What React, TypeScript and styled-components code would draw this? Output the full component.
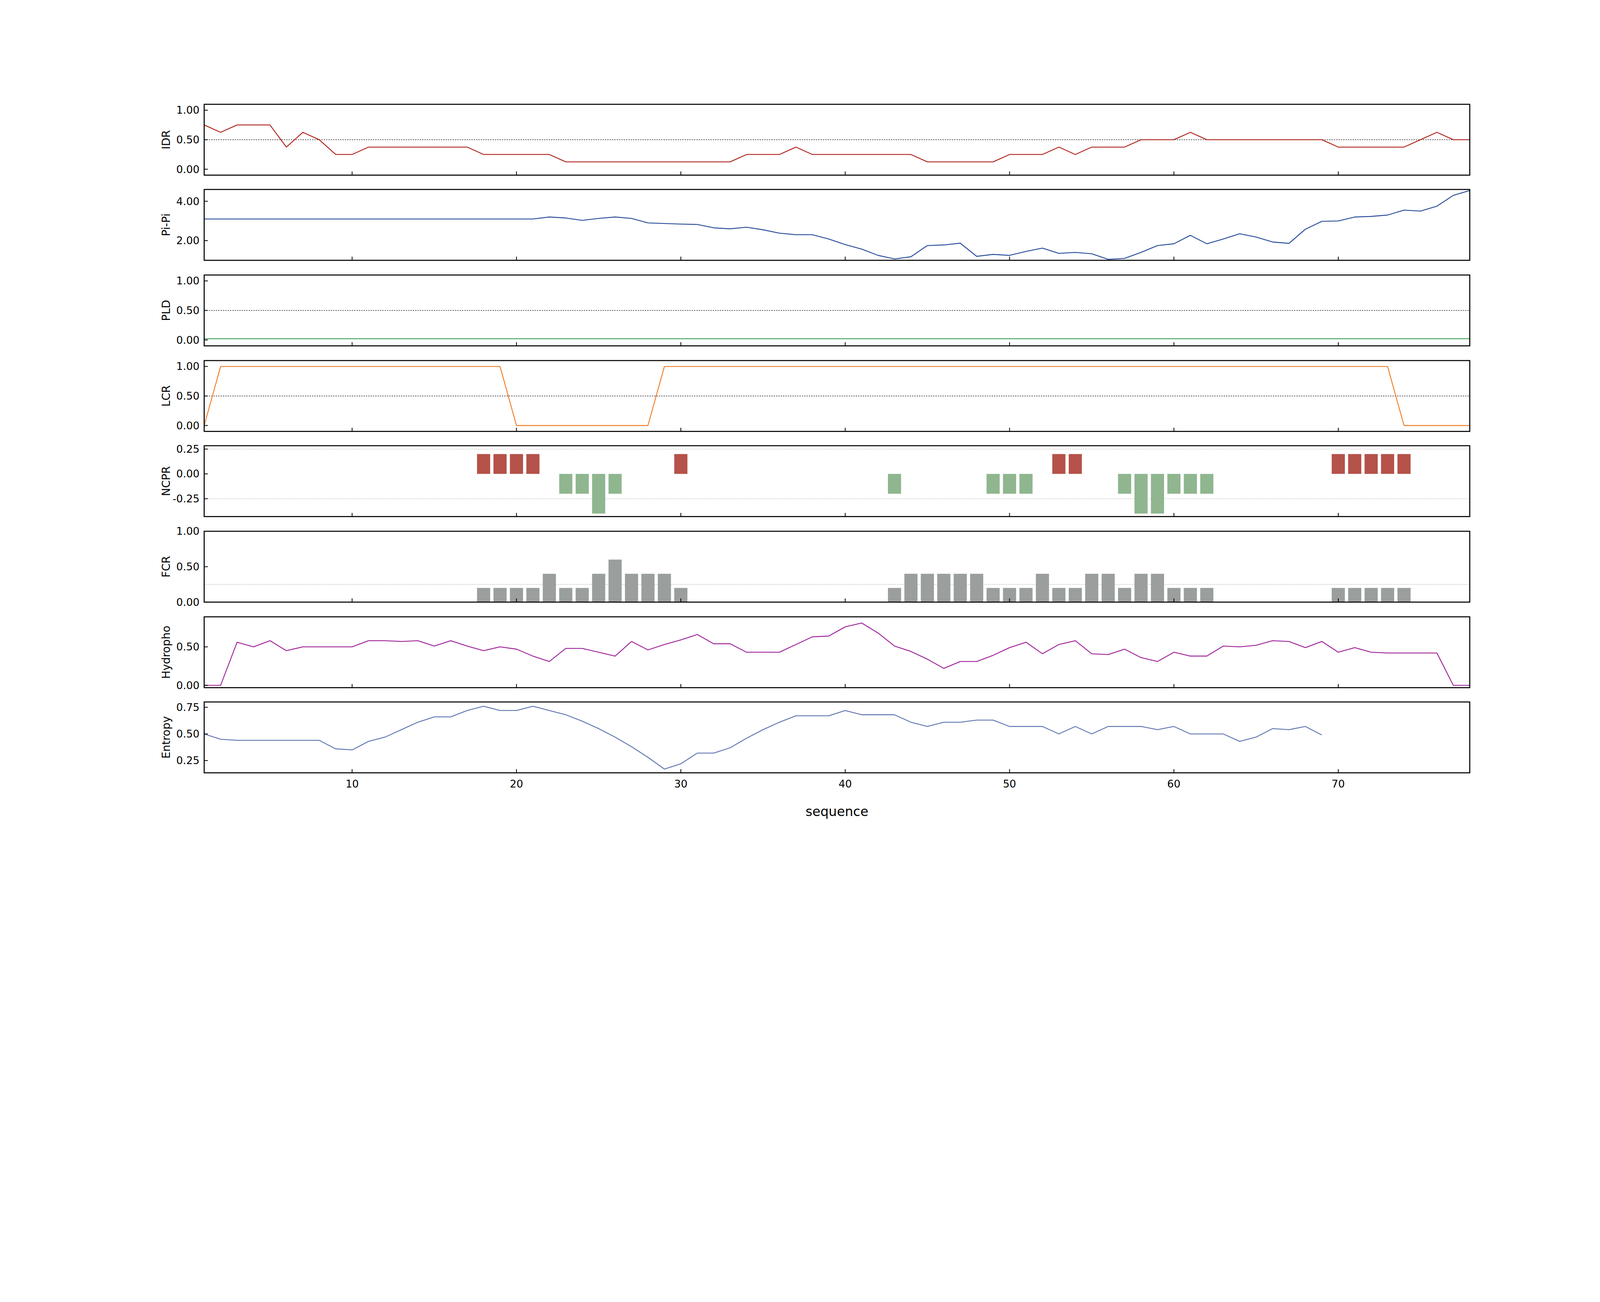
import React from "react";
import styled, { createGlobalStyle } from "styled-components";

const Global = createGlobalStyle`
  html, body { margin: 0; padding: 0; background: #fff; overflow: hidden; }
  body { font-family: "DejaVu Sans", sans-serif; }
`;

const S = 2 / 3;
const W = 6250;
const L = 784;
const PW = 4860;
const PH = 272;
const px = (x: number) => L + ((x - 1) * PW) / 77;

const Figure = styled.div`
  width: ${W * S}px;
  height: ${3333 * S}px;
  padding-top: ${400 * S}px;
  box-sizing: border-box;
  display: flex;
  flex-direction: column;
  gap: ${56 * S}px;
  background: #fff;
  overflow: hidden;
`;
const PanelSvg = styled.svg`
  display: block;
  overflow: visible;
  flex: none;
`;
const Bottom = styled.div`
  display: flex;
  flex-direction: column;
  margin-top: ${-56 * S}px;
`;
const XLabel = styled.div`
  width: ${PW * S}px;
  margin-left: ${L * S}px;
  text-align: center;
  font-family: "DejaVu Sans", sans-serif;
  font-size: ${50 * S}px;
  line-height: 1.15;
  color: #000;
  margin-top: ${50 * S}px;
`;

type Ref = { v: number; color: string; dash: string };
type PanelProps = {
  label: string;
  ymin: number;
  ymax: number;
  ticks: [number, string][];
  line?: number[];
  bars?: [number, number, string][];
  color?: string;
  refs?: Ref[];
};

const Panel: React.FC<PanelProps> = ({ label, ymin, ymax, ticks, line, bars, color, refs }) => {
  const py = (v: number) => PH - ((v - ymin) / (ymax - ymin)) * PH;
  const bw = (PW / 77) * 0.8;
  return (
    <PanelSvg width={W * S} height={PH * S} viewBox={`0 0 ${W} ${PH}`}>
      <defs>
        <clipPath id={`c-${label}`}>
          <rect x={L} y={0} width={PW} height={PH} />
        </clipPath>
      </defs>
      <text
        x={0}
        y={0}
        transform={`translate(652 ${PH / 2}) rotate(-90)`}
        textAnchor="middle"
        fontSize={42}
        fontFamily="DejaVu Sans, sans-serif"
      >
        {label}
      </text>
      <g clipPath={`url(#c-${label})`}>
        {refs?.map((r, i) => (
          <line key={i} x1={L} x2={L + PW} y1={py(r.v)} y2={py(r.v)} stroke={r.color} strokeWidth={2} strokeDasharray={r.dash} />
        ))}
        {bars?.map(([x, v, c], i) => (
          <rect key={i} x={px(x) - bw / 2} width={bw} y={Math.min(py(v), py(0))} height={Math.abs(py(v) - py(0))} fill={c} />
        ))}
        {line && (
          <polyline
            fill="none"
            stroke={color}
            strokeWidth={3.5}
            strokeLinejoin="round"
            points={line.map((v, i) => `${px(i + 1)},${py(v)}`).join(" ")}
          />
        )}
      </g>
      {ticks.map(([v, t]) => (
        <g key={t}>
          <line x1={L} x2={L + 14} y1={py(v)} y2={py(v)} stroke="#000" strokeWidth={3} />
          <text x={L - 18} y={py(v) + 14} textAnchor="end" fontSize={40} fontFamily="DejaVu Sans, sans-serif">
            {t}
          </text>
        </g>
      ))}
      {[10, 20, 30, 40, 50, 60, 70].map((x) => (
        <line key={x} x1={px(x)} x2={px(x)} y1={PH} y2={PH - 14} stroke="#000" strokeWidth={3} />
      ))}
      <rect x={L} y={0} width={PW} height={PH} fill="none" stroke="#000" strokeWidth={4} />
    </PanelSvg>
  );
};

const idr = [0.75,0.625,0.75,0.75,0.75,0.375,0.625,0.5,0.25,0.25,0.375,0.375,0.375,0.375,0.375,0.375,0.375,0.25,0.25,0.25,0.25,0.25,0.125,0.125,0.125,0.125,0.125,0.125,0.125,0.125,0.125,0.125,0.125,0.25,0.25,0.25,0.375,0.25,0.25,0.25,0.25,0.25,0.25,0.25,0.125,0.125,0.125,0.125,0.125,0.25,0.25,0.25,0.375,0.25,0.375,0.375,0.375,0.5,0.5,0.5,0.625,0.5,0.5,0.5,0.5,0.5,0.5,0.5,0.5,0.375,0.375,0.375,0.375,0.375,0.5,0.625,0.5,0.5];
const pipi = [3.1,3.1,3.1,3.1,3.1,3.1,3.1,3.1,3.1,3.1,3.1,3.1,3.1,3.1,3.1,3.1,3.1,3.1,3.1,3.1,3.1,3.2,3.15,3.03,3.13,3.2,3.13,2.9,2.87,2.84,2.82,2.65,2.6,2.68,2.55,2.38,2.3,2.3,2.08,1.8,1.57,1.25,1.07,1.18,1.75,1.78,1.87,1.2,1.3,1.25,1.45,1.62,1.35,1.4,1.33,1.05,1.1,1.4,1.75,1.84,2.27,1.84,2.08,2.35,2.18,1.93,1.86,2.58,2.98,3.0,3.2,3.23,3.3,3.55,3.5,3.75,4.3,4.55];
const pld = Array.from({ length: 78 }, () => 0.02);
const lcr = Array.from({ length: 78 }, (_, i) => {
  const x = i + 1;
  if (x === 1) return 0;
  if (x >= 20 && x <= 28) return 0;
  if (x >= 74) return 0;
  return 1;
});
const hyd = [0,0,0.56,0.5,0.58,0.45,0.5,0.5,0.5,0.5,0.58,0.58,0.57,0.58,0.51,0.58,0.51,0.45,0.5,0.47,0.38,0.31,0.48,0.48,0.43,0.38,0.57,0.46,0.53,0.59,0.66,0.54,0.54,0.43,0.43,0.43,0.53,0.63,0.64,0.76,0.81,0.68,0.51,0.44,0.34,0.22,0.31,0.31,0.39,0.49,0.56,0.41,0.53,0.58,0.41,0.4,0.47,0.36,0.31,0.43,0.38,0.38,0.51,0.5,0.52,0.58,0.57,0.49,0.57,0.43,0.49,0.43,0.42,0.42,0.42,0.42,0,0];
const ent = [0.5,0.45,0.44,0.44,0.44,0.44,0.44,0.44,0.36,0.35,0.43,0.47,0.54,0.61,0.66,0.66,0.72,0.76,0.72,0.72,0.76,0.72,0.68,0.62,0.55,0.47,0.38,0.28,0.17,0.22,0.32,0.32,0.37,0.46,0.54,0.61,0.67,0.67,0.67,0.72,0.68,0.68,0.68,0.61,0.57,0.61,0.61,0.63,0.63,0.57,0.57,0.57,0.5,0.57,0.5,0.57,0.57,0.57,0.54,0.57,0.5,0.5,0.5,0.43,0.47,0.55,0.54,0.57,0.49];

const RED = "#b5524a";
const GREEN = "#8fb68f";
const GRAY = "#9a9f9e";
const ncpr: [number, number, string][] = [
  ...[18, 19, 20, 21, 30, 53, 54, 70, 71, 72, 73, 74].map((x) => [x, 0.2, RED] as [number, number, string]),
  ...[23, 24, 26, 43, 49, 50, 51, 57, 60, 61, 62].map((x) => [x, -0.2, GREEN] as [number, number, string]),
  ...[25, 58, 59].map((x) => [x, -0.4, GREEN] as [number, number, string]),
];
const fcrVals: Record<number, number> = {
  18: .2, 19: .2, 20: .2, 21: .2, 22: .4, 23: .2, 24: .2, 25: .4, 26: .6, 27: .4, 28: .4, 29: .4, 30: .2,
  43: .2, 44: .4, 45: .4, 46: .4, 47: .4, 48: .4, 49: .2, 50: .2, 51: .2, 52: .4, 53: .2, 54: .2, 55: .4, 56: .4,
  57: .2, 58: .4, 59: .4, 60: .2, 61: .2, 62: .2, 70: .2, 71: .2, 72: .2, 73: .2, 74: .2,
};
const fcr: [number, number, string][] = Object.entries(fcrVals).map(([k, v]) => [Number(k), v, GRAY]);

const blackDot: Ref = { v: 0.5, color: "#000", dash: "5 4" };
const t01: [number, string][] = [[0, "0.00"], [0.5, "0.50"], [1, "1.00"]];

const XTicks: React.FC = () => (
  <PanelSvg width={W * S} height={70 * S} viewBox={`0 0 ${W} 70`}>
    {[10, 20, 30, 40, 50, 60, 70].map((x) => (
      <text key={x} x={px(x)} y={56} textAnchor="middle" fontSize={40} fontFamily="DejaVu Sans, sans-serif">
        {x}
      </text>
    ))}
  </PanelSvg>
);

export default function App() {
  return (
    <>
      <Global />
      <Figure>
        <Panel label="IDR" ymin={-0.1} ymax={1.1} ticks={t01} line={idr} color="#b2231b" refs={[blackDot]} />
        <Panel label="Pi-Pi" ymin={1.0} ymax={4.6} ticks={[[2, "2.00"], [4, "4.00"]]} line={pipi} color="#2c4f9a" />
        <Panel label="PLD" ymin={-0.1} ymax={1.1} ticks={t01} line={pld} color="#3aa65a" refs={[blackDot]} />
        <Panel label="LCR" ymin={-0.1} ymax={1.1} ticks={t01} line={lcr} color="#f07f2a" refs={[blackDot]} />
        <Panel
          label="NCPR"
          ymin={-0.43}
          ymax={0.284}
          ticks={[[-0.25, "-0.25"], [0, "0.00"], [0.25, "0.25"]]}
          bars={ncpr}
          refs={[
            { v: 0.25, color: "#bbb", dash: "4 3" },
            { v: -0.25, color: "#bbb", dash: "4 3" },
          ]}
        />
        <Panel label="FCR" ymin={0} ymax={1} ticks={t01} bars={fcr} refs={[{ v: 0.25, color: "#bbb", dash: "4 3" }]} />
        <Panel label="Hydropho" ymin={-0.03} ymax={0.89} ticks={[[0, "0.00"], [0.5, "0.50"]]} line={hyd} color="#a1259b" />
        <Panel label="Entropy" ymin={0.135} ymax={0.8} ticks={[[0.25, "0.25"], [0.5, "0.50"], [0.75, "0.75"]]} line={ent} color="#6277b1" />
        <Bottom>
          <XTicks />
          <XLabel>sequence</XLabel>
        </Bottom>
      </Figure>
    </>
  );
}
